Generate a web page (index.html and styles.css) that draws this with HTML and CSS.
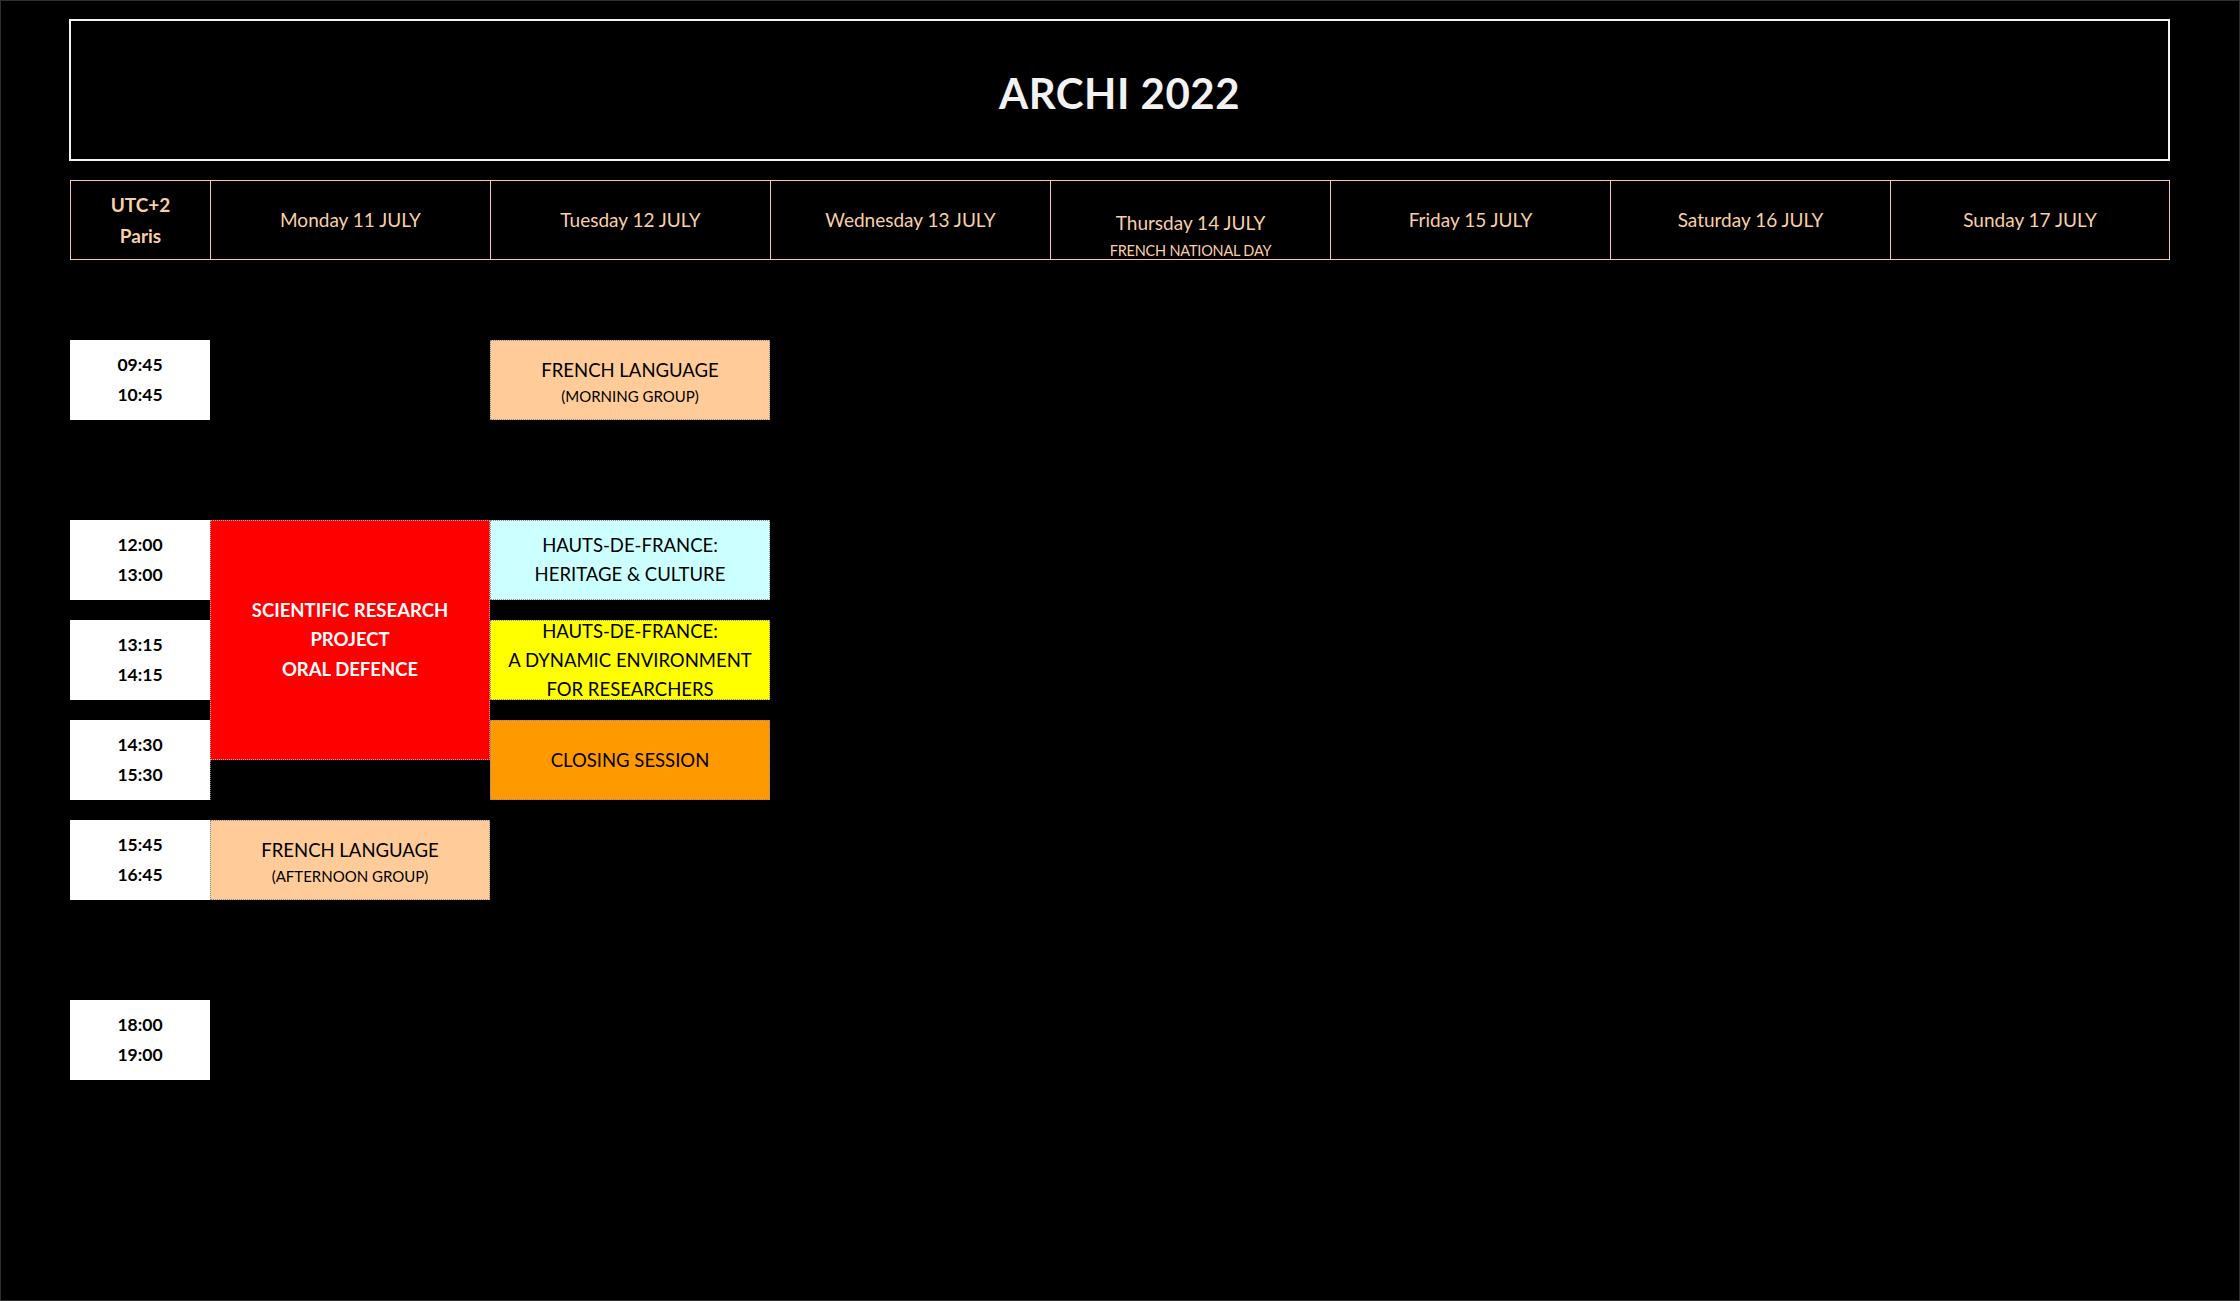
FILE: index.html
```html
<!DOCTYPE html>
<html lang="en">
<head>
<meta charset="utf-8">
<title>ARCHI 2022</title>
<link rel="stylesheet" href="styles.css">
</head>
<body>
<div class="page">
  <div class="title-box"><h1 class="title">ARCHI 2022</h1></div>

  <div class="days">
    <div class="day tz"><span>UTC+2</span><span>Paris</span></div>
    <div class="day">Monday 11 JULY</div>
    <div class="day">Tuesday 12 JULY</div>
    <div class="day">Wednesday 13 JULY</div>
    <div class="day day-end"><span class="d1">Thursday 14 JULY</span><span class="d2">FRENCH NATIONAL DAY</span></div>
    <div class="day">Friday 15 JULY</div>
    <div class="day">Saturday 16 JULY</div>
    <div class="day">Sunday 17 JULY</div>
  </div>

  <div class="grid">
    <div class="time r1"><span>09:45</span><span>10:45</span></div>
    <div class="ev peach two c3 r1"><span class="big">FRENCH LANGUAGE</span><span class="small">(MORNING GROUP)</span></div>

    <div class="time r2"><span>12:00</span><span>13:00</span></div>
    <div class="ev red c2 rred"><span>SCIENTIFIC RESEARCH</span><span>PROJECT</span><span>ORAL DEFENCE</span></div>
    <div class="ev cyan c3 r2"><span>HAUTS-DE-FRANCE:</span><span>HERITAGE &amp; CULTURE</span></div>

    <div class="time r3"><span>13:15</span><span>14:15</span></div>
    <div class="ev yellow c3 r3"><span>HAUTS-DE-FRANCE:</span><span>A DYNAMIC ENVIRONMENT</span><span>FOR RESEARCHERS</span></div>

    <div class="time r4"><span>14:30</span><span>15:30</span></div>
    <div class="blank c2 rblank"></div>
    <div class="ev orange c3 r4"><span>CLOSING SESSION</span></div>

    <div class="time r5"><span>15:45</span><span>16:45</span></div>
    <div class="ev peach two c2 r5"><span class="big">FRENCH LANGUAGE</span><span class="small">(AFTERNOON GROUP)</span></div>

    <div class="time r6"><span>18:00</span><span>19:00</span></div>
  </div>
</div>
</body>
</html>
```

FILE: styles.css
```css
html, body {
  margin: 0;
  padding: 0;
  background: #000;
}

.page {
  width: 2240px;
  height: 1301px;
  box-sizing: border-box;
  border: 1px solid #2e2e2e;
  padding: 18px 0 0 68px;
  font-family: Lato, "Open Sans", "Liberation Sans", sans-serif;
}

.title-box {
  width: 2101px;
  height: 142px;
  box-sizing: border-box;
  border: 2px solid #f2f2f2;
  display: flex;
  align-items: center;
  justify-content: center;
}

.title {
  margin: 0;
  padding-top: 5px;
  color: #f2f2f2;
  font-size: 42px;
  font-weight: 700;
  letter-spacing: 0.5px;
}

.days {
  margin: 19px 0 0 1px;
  width: 2100px;
  height: 80px;
  box-sizing: border-box;
  border: 1px solid #f4c9a3;
  display: grid;
  grid-template-columns: 139px repeat(6, 280px) 1fr;
  color: #f8cfa8;
}

.day {
  border-left: 1px solid #f4c9a3;
  display: flex;
  flex-direction: column;
  align-items: center;
  justify-content: center;
  font-size: 19px;
  padding-bottom: 2px;
}

.day.tz {
  border-left: none;
  font-weight: 700;
  line-height: 31px;
  padding-bottom: 0;
}

.day.day-end {
  justify-content: flex-end;
  padding-bottom: 0;
}

.day-end .d1 {
  line-height: 28px;
}

.day-end .d2 {
  margin-top: 6px;
  line-height: 16px;
  font-size: 14.5px;
  letter-spacing: -0.2px;
}

.grid {
  margin: 80px 0 0 1px;
  width: 2100px;
  display: grid;
  grid-template-columns: 140px repeat(7, 280px);
  grid-template-rows: repeat(37, 20px);
}

.time {
  grid-column: 1;
  background: #fff;
  color: #000;
  font-weight: 700;
  font-size: 17.5px;
  line-height: 29.5px;
  display: flex;
  flex-direction: column;
  align-items: center;
  justify-content: center;
  padding-bottom: 1px;
}

.ev {
  box-sizing: border-box;
  border: 1px dotted #8a8a8a;
  display: flex;
  flex-direction: column;
  align-items: center;
  justify-content: center;
  text-align: center;
  font-size: 18.5px;
  line-height: 29.5px;
  color: #000;
  white-space: nowrap;
}

.ev.two {
  padding-top: 4px;
}

.ev .big {
  line-height: 28px;
}

.ev .small {
  font-size: 15px;
  line-height: 24px;
}

.blank {
  border-left: 1px dotted #777;
}

.c2 { grid-column: 2; }
.c3 { grid-column: 3; }

.r1 { grid-row: 1 / 5; }
.r2 { grid-row: 10 / 14; }
.r3 { grid-row: 15 / 19; }
.r4 { grid-row: 20 / 24; }
.r5 { grid-row: 25 / 29; }
.r6 { grid-row: 34 / 38; }
.rred { grid-row: 10 / 22; }
.rblank { grid-row: 22 / 24; }

.peach { background: #ffcc99; }
.cyan { background: #ccffff; }
.yellow { background: #ffff00; line-height: 29px; }
.orange { background: #ff9900; padding-top: 2px; }
.red {
  background: #ff0000;
  color: #fff;
  font-weight: 700;
  border-color: #b0b0b0;
}
```
